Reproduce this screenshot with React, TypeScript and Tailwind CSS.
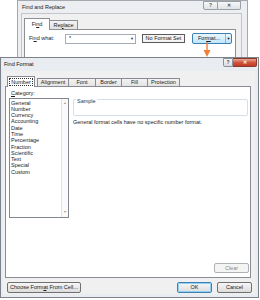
import React from "react";

const Btn = ({
  children,
  className = "",
}: {
  children: React.ReactNode;
  className?: string;
}) => (
  <div
    className={
      "flex items-center justify-center rounded-[2px] border border-[#707070] bg-gradient-to-b from-[#f6f6f6] to-[#dcdcdc] text-[#1a1a1a] " +
      className
    }
  >
    {children}
  </div>
);

const items = [
  "General",
  "Number",
  "Currency",
  "Accounting",
  "Date",
  "Time",
  "Percentage",
  "Fraction",
  "Scientific",
  "Text",
  "Special",
  "Custom",
];

export default function App() {
  return (
    <div className="relative w-[260px] h-[300px] overflow-hidden bg-white font-['Liberation_Sans',Arial,sans-serif] text-[5.5px] leading-[7px] text-[#1b1b1b]">
      {/* Back window: Find and Replace */}
      <div className="absolute left-[17px] top-0 w-[231px] h-[80px] border border-[#a3a8ae] bg-[#eceef1] flex flex-col">
        <div className="h-[12px] flex items-start">
          <span className="ml-[4px] mt-[3px] text-[#222]">Find and Replace</span>
          <div className="ml-auto mr-[6px] flex">
            <div className="w-[15px] h-[9px] border border-[#9aa0a7] rounded-bl-[2px] bg-gradient-to-b from-[#f6f7f8] to-[#e0e3e6] flex items-center justify-center text-[5px] text-[#555] font-bold">
              ?
            </div>
            <div className="w-[23px] h-[9px] border border-l-0 border-[#9aa0a7] rounded-br-[2px] bg-gradient-to-b from-[#f6f7f8] to-[#e0e3e6] flex items-center justify-center text-[5px] text-[#555] font-bold">
              ✕
            </div>
          </div>
        </div>
        <div className="ml-[3px] mr-[5px] flex-1 bg-[#f0f0f0] border border-[#c2c6cb] flex flex-col pt-[3px] pl-[2px]">
          <div className="flex items-end h-[12px] relative z-10">
            <div className="w-[26px] h-[12px] border border-b-0 border-[#8c8f94] bg-white flex items-center justify-center -mb-px pb-px">
              Fi<span className="underline">n</span>d
            </div>
            <div className="w-[28px] h-[9px] border border-l-0 border-b-0 border-[#8c8f94] bg-gradient-to-b from-[#f3f3f3] to-[#e2e2e2] flex items-center justify-center">
              Re<span className="underline">p</span>lace
            </div>
          </div>
          <div className="w-[212px] flex-1 bg-white border border-[#8c8f94] flex items-center pl-[4px] pt-[3px] self-start">
            <div className="self-start flex items-center w-full">
              <span className="w-[36px]">
                Fi<span className="underline">n</span>d what:
              </span>
              <div className="w-[71px] h-[10px] border border-[#a5acb5] flex items-center">
                <span className="ml-[3px] flex-1">*</span>
                <span className="w-[5px] text-[4px] text-[#333]">▼</span>
              </div>
              <div className="ml-[6px] w-[43px] h-[9px] border border-[#5a5a5a] bg-[#f4f4f4] flex items-center justify-center">
                No Format Set
              </div>
              <div className="ml-[7px] w-[40px] h-[11px] rounded-[2px] border border-[#3c7fb1] bg-gradient-to-b from-[#eaf6fd] to-[#bee6fd] flex items-center">
                <span className="flex-1 text-center">
                  For<span className="underline">m</span>at...
                </span>
                <span className="h-full border-l border-[#8cb8d8] w-[6px] flex items-center justify-center text-[4px]">
                  ▼
                </span>
              </div>
            </div>
          </div>
        </div>
      </div>

      {/* Orange arrow */}
      <svg
        className="absolute left-[202px] top-[42px]"
        width="10"
        height="16"
        viewBox="0 0 10 16"
      >
        <line x1="5" y1="0" x2="5" y2="9" stroke="#f07f3c" strokeWidth="1.4" />
        <polygon points="1.5,8 8.5,8 5,15" fill="#f07f3c" />
      </svg>

      {/* Front window: Find Format */}
      <div className="absolute left-0 top-[57px] w-[259px] h-[241px] border border-[#7d828a] bg-[#e9ecf0] flex flex-col">
        <div className="h-[13px] flex items-start">
          <span className="ml-[3px] mt-[3px] text-[#111]">Find Format</span>
          <div className="ml-auto mr-[1px] flex">
            <div className="w-[10px] h-[9px] border border-[#8a9099] rounded-bl-[2px] bg-gradient-to-b from-[#f4f5f7] to-[#d9dde2] flex items-center justify-center text-[5px] text-[#444] font-bold">
              ?
            </div>
            <div className="w-[24px] h-[9px] border border-l-0 border-[#8b3a30] rounded-br-[2px] bg-gradient-to-b from-[#e8a493] via-[#d1563f] to-[#c13a24] flex items-center justify-center text-[5px] text-white font-bold">
              ✕
            </div>
          </div>
        </div>
        <div className="ml-[2px] w-[252px] h-[223px] bg-[#f0f0f0] flex flex-col pt-[5px]">
          {/* tabs */}
          <div className="flex items-end h-[10px] pl-[4px] relative z-10">
            <div className="w-[28px] h-[11px] border border-b-0 border-[#898c95] bg-white flex items-center justify-center -mb-px">
              <span className="border border-dotted border-[#333] px-[1px] leading-[6px]">
                Number
              </span>
            </div>
            <div className="ml-[2px] w-[32px] h-[8px] border border-b-0 border-[#898c95] bg-gradient-to-b from-[#f3f3f3] to-[#e3e3e3] flex items-center justify-center">
              Alignment
            </div>
            <div className="w-[27px] h-[8px] border border-l-0 border-b-0 border-[#898c95] bg-gradient-to-b from-[#f3f3f3] to-[#e3e3e3] flex items-center justify-center">
              Font
            </div>
            <div className="w-[26px] h-[8px] border border-l-0 border-b-0 border-[#898c95] bg-gradient-to-b from-[#f3f3f3] to-[#e3e3e3] flex items-center justify-center">
              Border
            </div>
            <div className="w-[26px] h-[8px] border border-l-0 border-b-0 border-[#898c95] bg-gradient-to-b from-[#f3f3f3] to-[#e3e3e3] flex items-center justify-center">
              Fill
            </div>
            <div className="w-[32px] h-[8px] border border-l-0 border-b-0 border-[#898c95] bg-gradient-to-b from-[#f3f3f3] to-[#e3e3e3] flex items-center justify-center">
              Protection
            </div>
          </div>
          {/* panel */}
          <div className="ml-[2px] w-[246px] h-[192px] bg-white border border-[#898c95] flex flex-col">
            <div className="pl-[5px] pt-[3px] h-[11px]">
              <span className="underline">C</span>ategory:
            </div>
            <div className="flex flex-1 pl-[3px] pb-[4px]">
              <div className="w-[60px] h-[120px] border border-[#828790] flex">
                <div className="flex-1 pl-[1px] leading-[6.3px] pt-[0.5px]">
                  {items.map((t) => (
                    <div key={t}>{t}</div>
                  ))}
                </div>
                <div className="w-[7px] border-l border-[#e2e3e5] bg-[#fafafa] flex flex-col items-center justify-between text-[3.5px] text-[#9a9a9a] py-[1px]">
                  <span>▲</span>
                  <span>▼</span>
                </div>
              </div>
              <div className="ml-[4px] flex-1 flex flex-col pr-[1px]">
                <div className="relative mt-[1px] h-[17px] w-[175px] border border-[#d5dfe5] rounded-[2px]">
                  <span className="absolute left-[2px] top-[-2px] bg-white px-[1px] text-[#1e395b]">
                    Sample
                  </span>
                </div>
                <div className="mt-[3px]">
                  General format cells have no specific number format.
                </div>
                <div className="mt-auto self-end w-[35px] h-[10px] rounded-[2px] border border-[#adb2b5] bg-[#f4f4f4] text-[#8a8a8a] flex items-center justify-center mr-[0px]">
                  Clear
                </div>
              </div>
            </div>
          </div>
          {/* bottom buttons */}
          <div className="flex mt-[4px] pl-[4px] pr-[3px]">
            <Btn className="w-[74px] h-[11px]">
              <span>
                Choose Form<span className="underline">a</span>t From Cell...
              </span>
            </Btn>
            <div className="ml-auto flex gap-[5px]">
              <div className="w-[35px] h-[11px] rounded-[2px] border border-[#3c7fb1] bg-gradient-to-b from-[#f6f6f6] to-[#dcdcdc] flex items-center justify-center">
                <div className="w-[33px] h-[9px] border border-[#8fd0f4] rounded-[1px] flex items-center justify-center">
                  OK
                </div>
              </div>
              <Btn className="w-[35px] h-[11px]">Cancel</Btn>
            </div>
          </div>
        </div>
      </div>
    </div>
  );
}
